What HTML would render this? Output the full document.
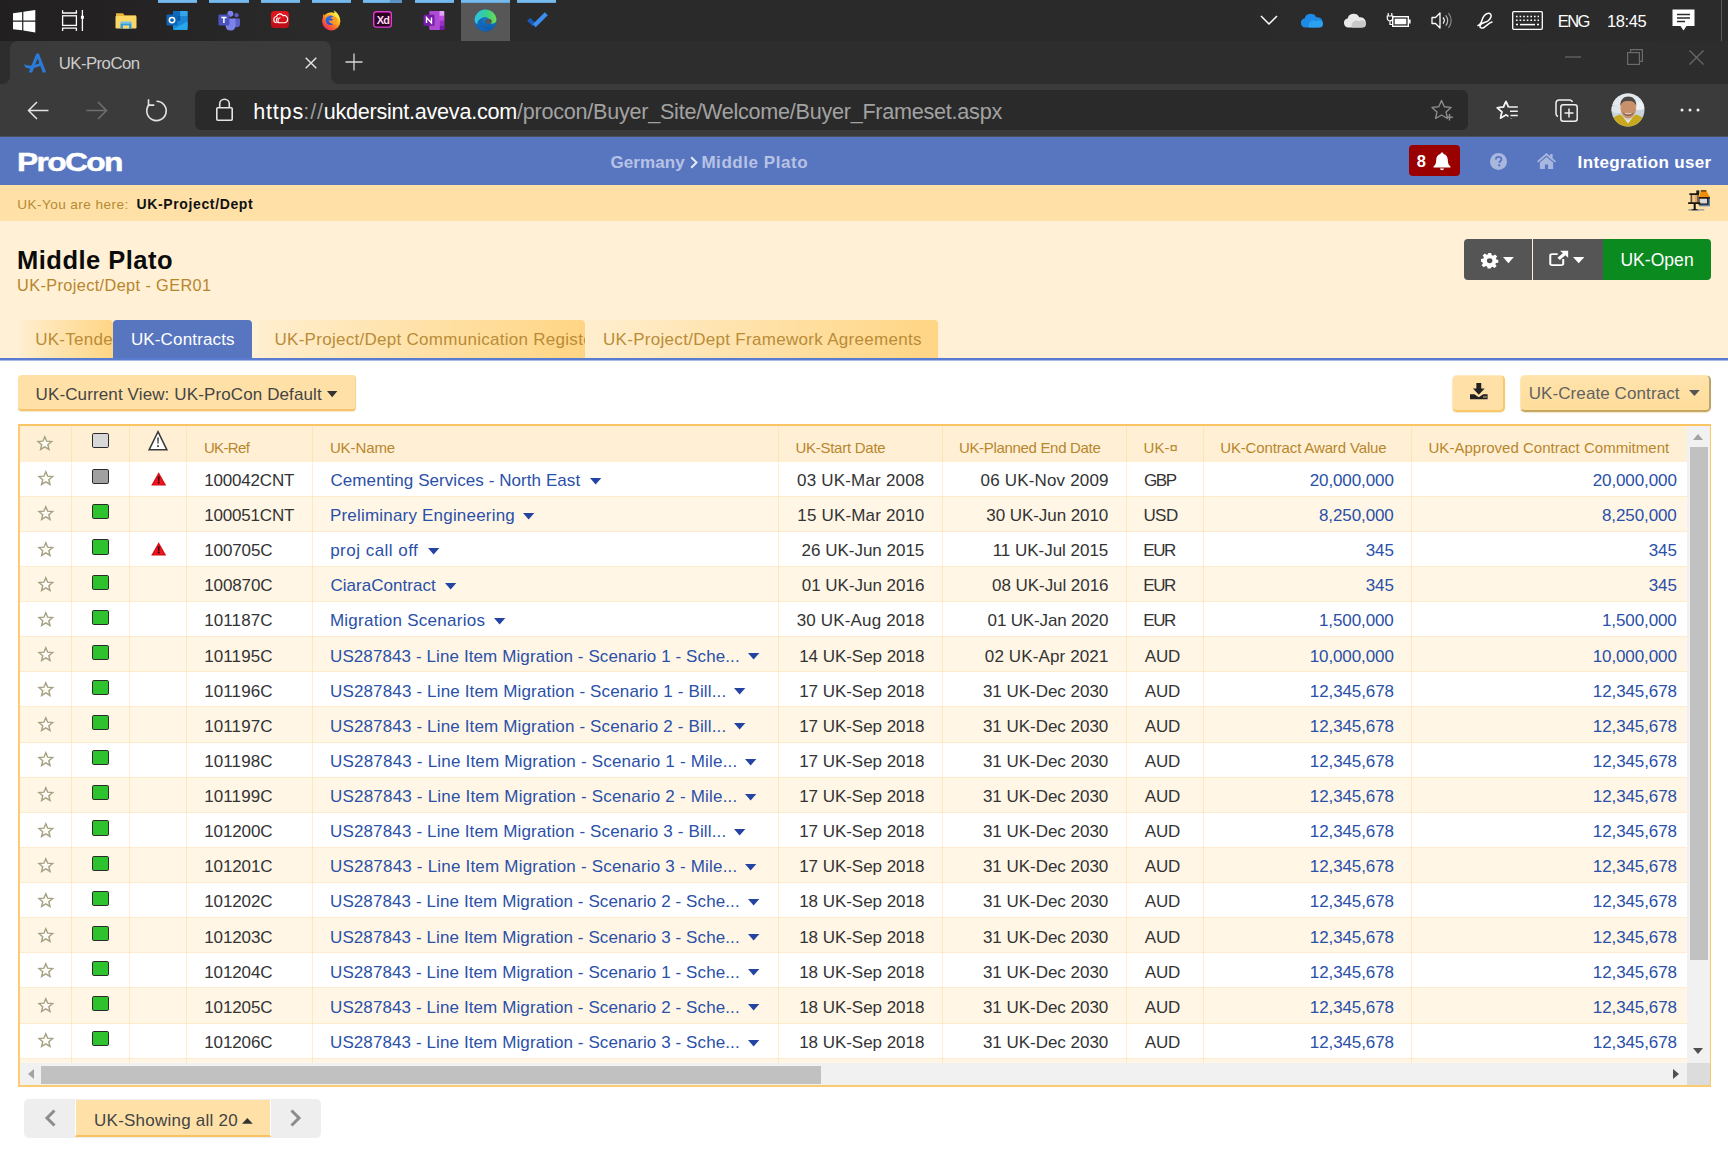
<!DOCTYPE html>
<html><head><meta charset="utf-8"><title>UK-ProCon</title>
<style>
*{box-sizing:border-box;margin:0;padding:0}
html,body{width:1728px;height:1152px;overflow:hidden;background:#fff}
body{font-family:"Liberation Sans",sans-serif;position:relative;color:#333}
.abs{position:absolute}
.t{position:absolute;white-space:nowrap;line-height:normal}
svg{display:block;position:absolute;overflow:visible}
/* ---------- Windows taskbar ---------- */
#taskbar{position:absolute;left:0;top:0;width:1728px;height:41px;background:linear-gradient(90deg,#211f1f 0,#252323 150px,#2a2a2a 300px,#2b2b2b 100%)}
#taskbar .ind{position:absolute;top:0;height:3px;background:linear-gradient(#76b9ed 0,#76b9ed 2px,#6aa6d6 2px)}
#taskbar .act{position:absolute;left:461px;top:3px;width:49px;height:38px;background:#575757}
#taskbar .tt{position:absolute;color:#fff;font-size:16.5px;top:11px;letter-spacing:-.2px}
/* ---------- Edge tab strip ---------- */
#tabstrip{position:absolute;left:0;top:41px;width:1728px;height:43px;background:#2d2d2d}
#tab{position:absolute;left:10px;top:0px;width:321px;height:43px;background:#3b3b3b;border-radius:8px 8px 0 0}
#tab .ttl{position:absolute;left:49px;top:12px;font-size:16.2px;color:#d2d2d2;letter-spacing:-.1px}
#toolbar{position:absolute;left:0;top:84px;width:1728px;height:52px;background:#3b3b3b}
#url{position:absolute;left:195px;top:6px;width:1273px;height:40px;background:#2a2a2a;border-radius:6px}
#url .u{position:absolute;left:59px;top:8px;font-size:20.2px;color:#a4a4a4;white-space:nowrap;letter-spacing:-.1px}
#url .u b{font-weight:normal;color:#fff}
#url .u i{font-style:normal;color:#9a9a9a}
/* ---------- App ---------- */
#nav{position:absolute;left:0;top:136px;width:1728px;height:49px;background:#5876c0;border-top:1px solid #4a4f60}
#crumb{position:absolute;left:611px;top:15px;font-weight:bold;font-size:16.6px;color:#c6cfea;white-space:nowrap;letter-spacing:-.25px}
#user{position:absolute;left:1578px;top:15px;font-weight:bold;font-size:16.6px;color:#fff;white-space:nowrap;letter-spacing:-.3px}
#bell{position:absolute;left:1408.500px;top:8px;width:51.200px;height:31.200px;background:#9b0000;border-radius:4px;color:#fff;font-weight:bold;font-size:16.5px}
#here{position:absolute;left:0;top:185px;width:1728px;height:36px;background:#ffe1a8}
#here .a{position:absolute;left:18px;top:11px;font-size:13.6px;color:#b58a32;white-space:nowrap}
#here .b{position:absolute;left:137px;top:11px;font-size:13.8px;color:#111;font-weight:bold;white-space:nowrap;letter-spacing:-.1px}
#hdr{position:absolute;left:0;top:221px;width:1728px;height:137px;background:#fff0d6}
#blueline{position:absolute;left:0;top:358px;width:1728px;height:3px;background:linear-gradient(#5a7cd0 0,#5a7cd0 2px,#a9bbe6 2px)}
#h1{position:absolute;left:18px;top:244px;font-size:26.5px;font-weight:bold;color:#0b0b0b;white-space:nowrap;letter-spacing:-.75px}
#h2{position:absolute;left:18px;top:275px;font-size:16.8px;color:#b8862d;white-space:nowrap;letter-spacing:-.25px}
.tab{position:absolute;top:320px;height:38px;font-size:17px;color:#b98c38;white-space:nowrap;overflow:hidden;background:linear-gradient(90deg,#ffeecf 0,#ffe5b3 35%,#ffd98f 85%,#ffd585 100%);border-radius:4px 4px 0 0;letter-spacing:-.2px}
.tab span{position:absolute;top:9px}
.tab.on{background:#5876c0;color:#fff}
.btng{position:absolute;top:239px;height:41px;background:#555}
.ybtn{position:absolute;background:#ffe1a8;border-bottom:2px solid #f5c46a;border-right:1px solid #f8d28c;border-radius:3px;font-size:17px;color:#444;white-space:nowrap;letter-spacing:-.2px;box-shadow:0 1px 1px rgba(200,150,50,.25)}
.ybtn span{position:absolute;top:9px}
/* ---------- grid ---------- */
#grid{position:absolute;left:18px;top:424px;width:1693px;height:663px;border:2px solid #fcc563;border-left-color:#fdcb74;border-bottom-color:#fdca70;border-right:1px solid #fdc766;overflow:hidden;background:#fff}
#ghead{position:absolute;left:0;top:0;width:1667px;height:36px;background:#fff0d5}
.row{position:absolute;left:0;width:1667px;font-size:17px;color:#333;white-space:nowrap;border-bottom:1px solid #ffeccd}
.row.even{background:#fff6e6}
.row.odd{background:#fff}
.sq{position:absolute;width:16.600px;height:15.200px;border:1.700px solid #2b2b2b;border-radius:1.800px}
.sq.grey{background:#a0a0a0}
.sq.green{background:#2ec22e}
.vl{position:absolute;top:0;width:1px;height:640px;background:rgba(251,210,140,.38)}
#vsb{position:absolute;left:1667px;top:0;width:23px;height:637px;background:#f1f1f1}
#vsb .thumb{position:absolute;left:2.500px;top:21px;width:18.500px;height:513px;background:#c1c1c1}
#vsb .up{left:6px;top:8px;width:10px;height:6px}
#vsb .dn{left:6px;top:622px;width:10px;height:6px}
#hsb{position:absolute;left:0;top:637px;width:1690px;height:22px;background:#f1f1f1}
#hsb .thumb{position:absolute;left:21px;top:2.5px;width:780px;height:18px;background:#c1c1c1}
#hsb .lf{left:8px;top:6px;width:6px;height:10px}
#hsb .rt{left:1653px;top:6px;width:6px;height:10px}
#hsb .corner{position:absolute;left:1667px;top:0;width:23px;height:22px;background:#dcdcdc}
/* ---------- pager ---------- */
#pager{position:absolute;left:24.400px;top:1099px;width:296.400px;height:38.500px;background:#eeeeee;border-radius:5px}
#pager .mid{position:absolute;left:51px;top:1px;width:196px;height:37px;background:#ffe1a8;border-bottom:2px solid #f9c260;border-left:1px solid #fff;border-right:1px solid #fff;font-size:17px;color:#444;letter-spacing:-.2px}
#pager .mid span{position:absolute;left:18px;top:10px;white-space:nowrap}

</style></head>
<body>
<div id="taskbar">
<div class="ind" style="left:158px;width:39px"></div>
<div class="ind" style="left:209px;width:40px"></div>
<div class="ind" style="left:261px;width:39px"></div>
<div class="ind" style="left:312px;width:39px"></div>
<div class="ind" style="left:363px;width:39px"></div><div class="abs" style="left:390px;top:0;width:12px;height:3px;background:#5a93c2"></div>
<div class="ind" style="left:415px;width:39px"></div>
<div class="ind" style="left:461px;width:49px"></div>
<div class="ind" style="left:517px;width:39px"></div>
<div class="act"></div>
<!-- windows logo -->
<svg style="left:13px;top:9.500px;width:22.300px;height:22.400px" viewBox="0 0 22 22" preserveAspectRatio="none"><path d="M0 3.200L9 2V10.400H0zM10.200 1.800L22 0V10.400H10.200zM0 11.600H9V20L0 18.800zM10.200 11.600H22V22L10.200 20.200z" fill="#fff"/></svg>
<!-- task view -->
<svg style="left:61px;top:9px;width:24px;height:23px" viewBox="0 0 24 23"><path d="M1.600 1.200V4h13.800V1.200M1.600 22V19.200h13.800V22" stroke="#fff" stroke-width="1.300" fill="none"/><rect x="1.600" y="6.800" width="13.800" height="9.600" fill="none" stroke="#fff" stroke-width="1.300"/><path d="M21.400 1v21" stroke="#fff" stroke-width="1.300"/><rect x="19.900" y="6.800" width="3" height="3" fill="#fff"/></svg>
<!-- explorer -->
<svg style="left:115px;top:12px;width:22px;height:18px" viewBox="0 0 22 18"><path d="M1 1.2h7l1.6 2H21v3H1z" fill="#e8b43a"/><rect x="0.5" y="4" width="21" height="12.5" rx="0.8" fill="#fbd766"/><path d="M5.5 16.5v-5.2h11v5.2" fill="#2f9ee6"/><rect x="8" y="13.4" width="6" height="3.1" fill="#fbd766"/><rect x="5.5" y="9.6" width="11" height="1.9" fill="#68c0f5"/></svg>
<!-- outlook -->
<svg style="left:166px;top:10px;width:22px;height:21px" viewBox="0 0 22 21"><rect x="7" y="1" width="14.5" height="15" rx="1" fill="#1a86d8"/><rect x="7" y="1" width="7.2" height="5" fill="#0f6cbd"/><rect x="14.2" y="1" width="7.3" height="5" fill="#35a5ee"/><rect x="14.2" y="6" width="7.3" height="5" fill="#1a86d8"/><rect x="7" y="6" width="7.2" height="5" fill="#0d5aa3"/><path d="M7 11l7.3 4.8 7.2-4.8v8a1 1 0 0 1-1 1H8a1 1 0 0 1-1-1z" fill="#1490df"/><path d="M7 19.5L21.5 11.4v7.6a1 1 0 0 1-1 1z" fill="#28a8ea"/><rect x="0.5" y="4.6" width="11" height="11" rx="1" fill="#0f64b5"/><circle cx="6" cy="10.1" r="2.7" fill="none" stroke="#fff" stroke-width="1.5"/></svg>
<!-- teams -->
<svg style="left:218px;top:10px;width:22px;height:21px" viewBox="0 0 22 21"><circle cx="18.6" cy="5.2" r="2.1" fill="#5b5fc7"/><path d="M15.5 8.4h5.6a.9.9 0 0 1 .9.9v4.8a3.2 3.2 0 0 1-6.5 0z" fill="#5b5fc7"/><circle cx="12.4" cy="3.8" r="3" fill="#7b83eb"/><path d="M7.6 8.4h9a1 1 0 0 1 1 1v6.2a5 5 0 0 1-10 0z" fill="#7b83eb"/><rect x="0.4" y="4.6" width="11" height="11" rx="1" fill="#4b53bc"/><path d="M3.3 7.6h5.2M5.9 7.6v5.4" stroke="#fff" stroke-width="1.5"/></svg>
<!-- creative cloud -->
<svg style="left:271px;top:11px;width:18px;height:16.800px" viewBox="0 0 21 18" preserveAspectRatio="none"><rect x="0" y="0" width="21" height="18" rx="4" fill="#e0141e"/><rect x="0" y="10" width="21" height="8" rx="4" fill="#c00f18"/><rect x="0" y="8" width="21" height="5" fill="#d61219"/><path d="M6 12.600a3.400 3.400 0 0 1 .2-6.700 4.500 4.500 0 0 1 7.900-.8 3.900 3.900 0 1 1 1.300 7.500H9a2.800 2.800 0 0 1-1.200-5.300" fill="none" stroke="#fff" stroke-width="1.300" stroke-linecap="round"/><path d="M9.200 12.600c-2-1.800-1-5 1.500-5.300" fill="none" stroke="#fff" stroke-width="1.100" stroke-linecap="round"/></svg>
<!-- firefox -->
<svg style="left:321px;top:10px;width:20.500px;height:20.600px" viewBox="0 0 21 21" preserveAspectRatio="none"><defs><linearGradient id="ffg" x1="0.850" y1="0.100" x2="0.200" y2="0.950"><stop offset="0" stop-color="#fff04a"/><stop offset="0.350" stop-color="#ffb321"/><stop offset="0.650" stop-color="#ff6a2b"/><stop offset="1" stop-color="#e42a5e"/></linearGradient><linearGradient id="ffb" x1="0" y1="0" x2="1" y2="1"><stop offset="0" stop-color="#1f7cf0"/><stop offset="1" stop-color="#3a33c4"/></linearGradient></defs><circle cx="10.500" cy="11.500" r="9.300" fill="url(#ffg)"/><path d="M12.800 0.300c3.600 1.800 5.900 5 6.400 8.600l-4.700-1.500c.1-2.800-.5-5.200-1.700-7.100z" fill="#ffe648"/><path d="M2.300 4.300c.9.400 1.600 1.100 2.100 2.100l-2.200 2.100c-.4-1.500-.4-2.900.1-4.200z" fill="#ff7a2a"/><circle cx="9.600" cy="10.500" r="4.900" fill="url(#ffb)"/><path d="M15.200 7.300c-2.300-.9-4.700-.3-5.900 1.300 1.400-.1 2.500.4 3.100 1.400-1.200 1.100-3.300 1.200-4.600.3.300 2.800 3.300 4.700 6.200 3.700 2.300-.8 3.400-3.300 2.500-5.600-.3-.4-.8-.8-1.300-1.100z" fill="#ff9b23"/><path d="M6.300 5.600c1-.7 2.300-.8 3.300-.3-.8.300-1.300.800-1.600 1.500-.7-.2-1.300-.6-1.700-1.200z" fill="#ff8a26"/></svg>
<!-- xd -->
<svg style="left:373px;top:11px;width:19px;height:16.800px" viewBox="0 0 19 16.800"><rect x="0.700" y="0.700" width="17.600" height="15.400" rx="2.600" fill="#2e001f" stroke="#e03bd2" stroke-width="1.400"/></svg>
<span class="t" style="left:376.7px;top:14px;font-size:11px;letter-spacing:-0.7px;color:#ffd9f7;font-weight:bold;">Xd</span>
<!-- onenote -->
<svg style="left:423px;top:10px;width:22px;height:21px" viewBox="0 0 22 21"><rect x="6.6" y="1" width="14.6" height="19" rx="1" fill="#ca64ea"/><rect x="16.4" y="1" width="4.8" height="4.8" fill="#e1a6f4"/><rect x="16.4" y="5.8" width="4.8" height="4.8" fill="#c04fe0"/><rect x="16.4" y="10.600" width="4.8" height="4.800" fill="#9a2fc4"/><rect x="16.4" y="15.4" width="4.8" height="4.600" fill="#7719aa"/><rect x="6.6" y="1" width="9.8" height="19" fill="#ae4bd5"/><rect x="0.5" y="4.8" width="11" height="11" rx="1" fill="#7719aa"/><path d="M3.5 13V7.600l5 5.400V7.600" fill="none" stroke="#fff" stroke-width="1.4"/></svg>
<!-- edge -->
<svg style="left:474px;top:9px;width:23px;height:23px" viewBox="0 0 23 23"><defs><linearGradient id="eg1" x1="0" y1="0" x2="1" y2="0"><stop offset="0" stop-color="#2ec1e8"/><stop offset="0.55" stop-color="#37d08c"/><stop offset="1" stop-color="#6fdc4a"/></linearGradient><linearGradient id="eg2" x1="0" y1="0" x2="0" y2="1"><stop offset="0" stop-color="#1b8fd8"/><stop offset="1" stop-color="#0d55a8"/></linearGradient></defs><circle cx="11.500" cy="11.500" r="11" fill="url(#eg2)"/><path d="M0.600 10.400A11 11 0 0 1 22.400 9.800c.3 2.400-.900 4.600-3.400 4.800-2.200.2-3.900-.6-4.400-1.700.9-1.100.7-2.900-.6-4C12 7.400 8.500 7.700 6.400 9.800c-1.700 1.800-2.300 4-1.800 6.300C2.200 14.900.300 12.800.600 10.400z" fill="url(#eg1)"/><path d="M8.300 10.900c-1.500 1.900-1.300 5 .6 7.100 2 2.200 5.100 2.900 8 1.800-2.900 2.900-7.600 3.300-10.800.9-3-2.300-3.700-6.300-1.700-9.500 1.300-1 2.700-1.100 3.900-.3z" fill="#1565b8" opacity=".85"/><ellipse cx="14.600" cy="12.200" rx="3.200" ry="2.500" fill="#565656"/></svg>
<!-- todo check -->
<svg style="left:526px;top:11px;width:23px;height:18px" viewBox="0 0 23 18"><path d="M1.200 9.700l3-3 5.200 5.200-3 3z" fill="#195abd"/><path d="M6.400 14.900l-3-3L15.500 0l3 3z" fill="#3c8df0" transform="translate(3.300 1.300)"/></svg>
<!-- tray -->
<svg style="left:1260px;top:15px;width:18px;height:10px" viewBox="0 0 18 10"><path d="M1 1l8 8 8-8" fill="none" stroke="#fff" stroke-width="1.500"/></svg>
<svg style="left:1300px;top:13px;width:24px;height:15px" viewBox="0 0 24 15"><path d="M5.400 14.500a4.600 4.600 0 0 1-.8-9.100A6.300 6.300 0 0 1 16.300 4.300 5.200 5.200 0 0 1 18.800 14.500z" fill="#1d8ae6"/><path d="M9 14.500a5 5 0 0 1 7.300-6.200 4 4 0 0 1 6.500 4.200 3 3 0 0 1-2.500 2z" fill="#2ea3f2" opacity=".9"/></svg>
<svg style="left:1343px;top:13px;width:24px;height:15px" viewBox="0 0 24 15"><path d="M5.400 14.500a4.600 4.600 0 0 1-.8-9.100A6.300 6.300 0 0 1 16.300 4.300 5.200 5.200 0 0 1 18.800 14.500z" fill="#e9e9e9"/><path d="M9 14.500a5 5 0 0 1 7.300-6.200 4 4 0 0 1 6.500 4.200 3 3 0 0 1-2.500 2z" fill="#c9c9c9"/></svg>
<!-- battery -->
<svg style="left:1387px;top:12px;width:24px;height:16px" viewBox="0 0 24 16"><rect x="5.700" y="4.700" width="15.600" height="9.600" fill="none" stroke="#fff" stroke-width="1.400"/><rect x="7.700" y="6.700" width="11.600" height="5.600" fill="#fff"/><rect x="22" y="7.500" width="1.600" height="4" fill="#fff"/><path d="M1.200 1v3M4.800 1v3M.3 4h5.400v2.200a2.700 2.700 0 0 1-5.400 0zM3 9v3.500h3" fill="none" stroke="#fff" stroke-width="1.200"/></svg>
<!-- speaker -->
<svg style="left:1431px;top:11px;width:22px;height:19px" viewBox="0 0 22 19"><path d="M1 6.500h3.500L9 2v15L4.500 12.500H1z" fill="none" stroke="#fff" stroke-width="1.300" stroke-linejoin="round"/><path d="M12 6.500a4.500 4.500 0 0 1 0 6" fill="none" stroke="#fff" stroke-width="1.200"/><path d="M14.700 4.300a7.800 7.800 0 0 1 0 10.400" fill="none" stroke="#bbb" stroke-width="1.200"/><path d="M17.400 2.200a11 11 0 0 1 0 14.600" fill="none" stroke="#888" stroke-width="1.200"/></svg>
<!-- pen -->
<svg style="left:1476px;top:11px;width:19px;height:19px" viewBox="0 0 19 19"><path d="M2 14.500c4-1 3.500-6.500 6-9.500 2-2.400 5-3.500 6.500-2 1.500 1.500.3 4.500-2 6.500-3 2.600-8 2-8.500 5.500-.2 1.800 1.800 2.800 4 1.500 2.500-1.500 4.500-4.500 8-5.500" fill="none" stroke="#fff" stroke-width="1.500" stroke-linecap="round"/></svg>
<!-- keyboard -->
<svg style="left:1512px;top:11px;width:31px;height:19px" viewBox="0 0 31 19"><rect x="0.700" y="0.700" width="29.600" height="17.600" rx="1" fill="none" stroke="#fff" stroke-width="1.300"/><path d="M4 5.500h23M4 9.300h23" stroke="#fff" stroke-width="1.500" stroke-dasharray="1.600 2"/><path d="M8 13.600h15" stroke="#fff" stroke-width="1.500"/><path d="M4 13.600h2M25 13.600h2" stroke="#fff" stroke-width="1.500"/></svg>
<span class="t" style="left:1557.8px;top:12px;font-size:16.5px;letter-spacing:-1.6px;color:#fff;">ENG</span>
<span class="t" style="left:1607.1px;top:12px;font-size:16.5px;letter-spacing:-0.42px;color:#fff;">18:45</span>
<!-- action center -->
<svg style="left:1672px;top:9px;width:23px;height:23px" viewBox="0 0 23 23"><path d="M0.500 0.500h22v16.500h-8l-3 4.500-3-4.500h-8z" fill="#fff"/><path d="M5 5.500h13M5 9h13M5 12.500h8" stroke="#2b2b2b" stroke-width="1.300"/></svg>
<div class="abs" style="left:1721px;top:0;width:1px;height:41px;background:#5a5a5a"></div>
</div>
<div id="tabstrip">
<div class="abs" style="left:0;top:33px;width:10px;height:10px;background:#3b3b3b"></div><div class="abs" style="left:0;top:23px;width:10px;height:20px;background:#2d2d2d;border-radius:0 0 8px 0"></div>
<div class="abs" style="left:331px;top:33px;width:10px;height:10px;background:#3b3b3b"></div><div class="abs" style="left:331px;top:23px;width:10px;height:20px;background:#2d2d2d;border-radius:0 0 0 8px"></div>
<div id="tab"><svg style="left:14px;top:11px;width:23px;height:22px" viewBox="0 0 23 22"><path d="M12.300 1.500h2.600L22.200 20.400h-3.400L13.600 6.600 8.200 20.400H4.700z" fill="#2b7cd9"/><path d="M0 12.200c4.500 2.300 10 1.800 17.300-2l1 2.600C10.500 17 4.500 17.300 1.300 15.200z" fill="#2b7cd9"/></svg><span class="t" style="left:48.7px;top:13px;font-size:16.8px;letter-spacing:-0.55px;color:#cdcdcd;">UK-ProCon</span>
<svg style="left:295px;top:16px;width:12px;height:12px" viewBox="0 0 12 12"><path d="M.700.700l10.600 10.600M11.300.700L.700 11.300" stroke="#e6e6e6" stroke-width="1.400"/></svg></div>
<svg style="left:345px;top:12px;width:18px;height:18px" viewBox="0 0 18 18"><path d="M9 .500v17M.500 9h17" stroke="#d6d6d6" stroke-width="1.300"/></svg>
<svg style="left:1565px;top:15px;width:16px;height:2px" viewBox="0 0 16 2"><path d="M0 1h16" stroke="#6b6b6b" stroke-width="1.200"/></svg>
<svg style="left:1627px;top:8px;width:16px;height:16px" viewBox="0 0 16 16"><rect x="0.600" y="3.600" width="11.800" height="11.800" fill="none" stroke="#6b6b6b" stroke-width="1.200"/><path d="M3.600 3.600V.600h11.800v11.800h-3" fill="none" stroke="#6b6b6b" stroke-width="1.200"/></svg>
<svg style="left:1689px;top:9px;width:15px;height:15px" viewBox="0 0 15 15"><path d="M.500.500l14 14M14.500.500l-14 14" stroke="#6b6b6b" stroke-width="1.200"/></svg>
</div>
<div id="toolbar">
<svg style="left:27px;top:17px;width:22px;height:19px" viewBox="0 0 22 19"><path d="M21.500 9.500H1.500M10 1L1.500 9.500 10 18" fill="none" stroke="#e4e4e4" stroke-width="1.500"/></svg>
<svg style="left:86px;top:17px;width:22px;height:19px" viewBox="0 0 22 19"><path d="M.500 9.500h20M12 1l8.500 8.500L12 18" fill="none" stroke="#6f6f6f" stroke-width="1.500"/></svg>
<svg style="left:145px;top:14px;width:24px;height:24px" viewBox="0 0 24 24"><path d="M11.500 3.200A9.700 9.700 0 1 1 4.300 6.400" fill="none" stroke="#e4e4e4" stroke-width="1.600"/><path d="M3.500 1.300v5.800h5.800" fill="none" stroke="#e4e4e4" stroke-width="1.600"/></svg>
<div id="url">
<svg style="left:21px;top:8px;width:17px;height:23px" viewBox="0 0 17 23"><rect x=".800" y="9.800" width="15.400" height="12.400" rx="1" fill="none" stroke="#e4e4e4" stroke-width="1.600"/><path d="M3.700 9.800V6a4.800 4.800 0 0 1 9.600 0v3.800" fill="none" stroke="#e4e4e4" stroke-width="1.600"/></svg>
<span class="t" style="left:58.2px;top:9px;font-size:21.6px;letter-spacing:0.8px;color:#fff;">https</span><span class="t" style="left:108.3px;top:9px;font-size:21.6px;letter-spacing:0.9px;color:#9c9c9c;">://</span><span class="t" style="left:128.8px;top:9px;font-size:21.6px;letter-spacing:-0.26px;color:#fff;">ukdersint.aveva.com</span><span class="t" style="left:322px;top:9px;font-size:21.6px;letter-spacing:-0.25px;color:#a2a2a2;">/procon/Buyer_Site/Welcome/Buyer_Frameset.aspx</span>
<svg style="left:1236px;top:9px;width:23px;height:22px" viewBox="0 0 23 22"><path d="M10.500 1.500l2.800 6.200 6.700.700-5 4.500 1.500 6.600-6-3.500-5.900 3.500 1.400-6.600-5-4.500 6.800-.700z" fill="none" stroke="#8c8c8c" stroke-width="1.400" stroke-linejoin="round"/><path d="M18.500 15v6.500M15.300 18.200h6.500" stroke="#8c8c8c" stroke-width="1.500"/><circle cx="18.500" cy="18.200" r="3.600" fill="#2a2a2a" opacity="0"/></svg>
</div>
<svg style="left:1496px;top:16px;width:22px;height:20px" viewBox="0 0 22 20"><path d="M10 1.300l2.500 5.800 6.300.600-4.800 4.200 1.400 6.200L10 14.900l-5.500 3.200 1.400-6.200L1.100 7.700l6.300-.600z" fill="#3b3b3b" stroke="#f0f0f0" stroke-width="1.500" stroke-linejoin="round"/><rect x="12.300" y="5.500" width="10" height="13" fill="#3b3b3b"/><path d="M10 1.300l2.500 5.800M12.300 6.500V5.500M1.100 7.700l6.300-.600L10 1.300M1.100 7.700l4.800 4.200-1.400 6.200L10 14.900l2.300 1.300" fill="none" stroke="#f0f0f0" stroke-width="1.500" stroke-linejoin="round"/><path d="M12.800 7h9M14 11.300h7.800M14.500 15.600h7.300" stroke="#f0f0f0" stroke-width="1.500"/></svg>
<svg style="left:1555px;top:15px;width:24px;height:23px" viewBox="0 0 24 23"><rect x="5.800" y="5.800" width="16.400" height="16.400" rx="2.500" fill="none" stroke="#f0f0f0" stroke-width="1.500"/><path d="M3 17.500A3 3 0 0 1 1 14.800V4A3 3 0 0 1 4 1h10.800a3 3 0 0 1 2.700 2" fill="none" stroke="#f0f0f0" stroke-width="1.500"/><path d="M14 9.500v9M9.500 14h9" stroke="#f0f0f0" stroke-width="1.500"/></svg>
<!-- avatar -->
<svg style="left:1611px;top:9px;width:34px;height:34px" viewBox="0 0 34 34"><defs><clipPath id="avc"><circle cx="17" cy="17" r="16.500"/></clipPath></defs><g clip-path="url(#avc)"><rect width="34" height="34" fill="#c9d3dc"/><rect x="0" y="0" width="34" height="12" fill="#e4e9ee"/><ellipse cx="7" cy="16" rx="8" ry="4" fill="#dfe5ea"/><ellipse cx="28" cy="13" rx="7" ry="4" fill="#eef1f4"/><path d="M0 34V27c3-3 6-5 9-5.500l8 6 8-6c3 .500 6 2.500 9 5.500v7z" fill="#c8a81f"/><path d="M12 24l5 6.500 5-6.500-5 3.500z" fill="#e8e8ea"/><ellipse cx="17.300" cy="15" rx="7.800" ry="10.300" fill="#c9906c"/><path d="M9.300 13.500c-.300-7 3.500-10 8-10s8.300 3 8 10c-1-3.500-2.500-5.500-8-5.500s-7 2-8 5.500z" fill="#4b4a47"/><path d="M11.500 19c1 5.500 10.500 5.500 11.600 0-1.500 2.500-10 2.500-11.600 0z" fill="#8a6650"/><path d="M13.500 19.800c1.500 2 6 2 7.500 0-2 .800-5.500.800-7.500 0z" fill="#f4ece6"/></g></svg>
<svg style="left:1680px;top:24px;width:20px;height:4px" viewBox="0 0 20 4"><circle cx="2" cy="2" r="1.500" fill="#f0f0f0"/><circle cx="10" cy="2" r="1.500" fill="#f0f0f0"/><circle cx="18" cy="2" r="1.500" fill="#f0f0f0"/></svg>
</div>
<div id="nav">
<span class="t" style="left:16.5px;top:10px;font-size:26.5px;letter-spacing:-1.41px;color:#fff;font-weight:bold;transform:scaleX(1.2);transform-origin:0 0;-webkit-text-stroke:.450px #fff;">ProCon</span>
<span class="t" style="left:610.4px;top:16px;font-size:17px;letter-spacing:0.12px;color:#b7c2e5;font-weight:bold;">Germany</span><svg style="left:690px;top:19px;width:8px;height:13px" viewBox="0 0 8 13"><path d="M1.200 1.200l5.300 5.300-5.300 5.300" fill="none" stroke="#e6eaf7" stroke-width="2"/></svg><span class="t" style="left:701.4px;top:16px;font-size:17px;letter-spacing:0.56px;color:#b7c2e5;font-weight:bold;">Middle Plato</span>
<div id="bell"><span class="t" style="left:8.3px;top:7px;font-size:16.5px;letter-spacing:1.5px;color:#fff;font-weight:bold;">8</span><svg style="left:24px;top:7px;width:18px;height:19px" viewBox="0 0 18 19"><path d="M9 .500c.900 0 1.500.600 1.500 1.400 3 .700 4.300 3.200 4.300 6.100 0 3.800 1.200 5.300 2.700 6.600v1H.500v-1C2 13.300 3.200 11.800 3.200 8c0-2.900 1.300-5.400 4.300-6.100C7.500 1.100 8.100.500 9 .500z" fill="#fff"/><path d="M6.800 16.600a2.300 2.300 0 0 0 4.400 0z" fill="#fff"/></svg></div>
<svg style="left:1490px;top:16px;width:17px;height:17px" viewBox="0 0 17 17"><circle cx="8.500" cy="8.500" r="8.500" fill="#a9b7de"/><path d="M5.800 6.600c0-1.700 1.200-2.700 2.800-2.700s2.800 1 2.800 2.400c0 1.900-2.100 2-2.100 3.700" fill="none" stroke="#5876c0" stroke-width="1.900"/><rect x="8.200" y="11.300" width="2" height="2" fill="#5876c0"/></svg>
<svg style="left:1537px;top:16px;width:19px;height:16px" viewBox="0 0 19 16"><path d="M9.500 0L0 8.200l1.200 1.300L9.500 2.500l8.300 7 1.200-1.300-3.400-2.900V1h-2.400v2.200z" fill="#a9b7de"/><path d="M9.500 4l-6.600 5.500V16h5v-4.500h3.200V16h5V9.500z" fill="#a9b7de"/></svg>
<span class="t" style="left:1577.6px;top:16px;font-size:17px;letter-spacing:0.34px;color:#fff;font-weight:bold;">Integration user</span>
</div>
<div id="here"><span class="t" style="left:17.2px;top:12px;font-size:13.6px;letter-spacing:0.43px;color:#b58a32;">UK-You are here:</span><span class="t" style="left:136.4px;top:11px;font-size:14px;letter-spacing:0.64px;color:#111;font-weight:bold;">UK-Project/Dept</span>
<svg style="left:1688px;top:4.600px;width:22px;height:21px" viewBox="0 0 22 21"><rect x="11" y="7" width="11" height="9.300" fill="#5d83a8"/><rect x="10.300" y="6.500" width="10.300" height="8.300" fill="#2a2a2a"/><rect x="11.600" y="8.400" width="7.400" height="5" fill="#d8d8d8"/><path d="M11 7.200L13 .600h5.200L22 7.200z" fill="#ee8d0c"/><path d="M12.700.400h5.600v1h-5.600z" fill="#1a0d00"/><path d="M10.600 7.300H22V8.500H10.600z" fill="#1a0d00"/><rect x="8.300" y=".400" width="3" height="3.600" fill="#1c1c12"/><rect x="3" y="4.200" width="7.400" height="8.800" fill="#d9a86c"/><rect x="4.700" y="4.200" width="2.400" height="8.800" fill="#f0c58e"/><rect x="2.600" y="4.200" width="1.100" height="8.800" fill="#3a2a18"/><rect x="9.400" y="4.200" width="1.100" height="8.800" fill="#5a4026"/><rect x="1.300" y="3.200" width="9.700" height="1.700" rx=".500" fill="#1d160d"/><rect x="0" y="12.300" width="12.400" height="1.700" rx=".500" fill="#1d160d"/><rect x="5.700" y="14" width="2" height="5.300" fill="#0d0d0d"/><rect x="0.300" y="19.200" width="16" height="1.300" fill="#8c9aa0"/><path d="M2.600 20.300c1.500-.8 3-1.200 4.100-1.200s2.600.400 4.100 1.200z" fill="#0d0d0d"/></svg>
</div>
<div id="hdr"></div>
<div id="blueline"></div>
<span class="t" style="left:17.05px;top:245.5px;font-size:25.5px;letter-spacing:0.48px;color:#0b0b0b;font-weight:bold;">Middle Plato</span>
<span class="t" style="left:17px;top:275.5px;font-size:16.3px;letter-spacing:0.39px;color:#b8862d;">UK-Project/Dept - GER01</span>
<div class="tab" style="left:20px;width:93px"><span class="t" style="left:15.2px;top:10px;font-size:17px;letter-spacing:0.26px;">UK-Tenders</span></div>
<div class="tab on" style="left:113px;width:139px"><span class="t" style="left:17.9px;top:10px;font-size:17px;letter-spacing:0.15px;">UK-Contracts</span></div>
<div class="tab" style="left:258px;width:327px"><span class="t" style="left:16.5px;top:10px;font-size:17px;letter-spacing:0.28px;">UK-Project/Dept Communication Register</span></div>
<div class="tab" style="left:585px;width:353px"><span class="t" style="left:18px;top:10px;font-size:17px;letter-spacing:0.3px;">UK-Project/Dept Framework Agreements</span></div>
<!-- top-right button group -->
<div class="btng" style="left:1464px;width:68px;border-radius:4px 0 0 4px"><svg style="left:17px;top:13.500px;width:17.300px;height:15.600px" viewBox="0 0 17 17" preserveAspectRatio="none"><path d="M7 0h3l.4 2.300 1.500.6 1.900-1.300 2.100 2.100-1.300 1.900.6 1.500L17 7.500v3l-2.300.400-.6 1.500 1.300 1.900-2.100 2.100-1.900-1.300-1.500.6L9.500 17h-3l-.4-2.300-1.500-.6-1.900 1.300-2.100-2.100 1.300-1.900-.6-1.500L0 9.500v-3l2.300-.400.6-1.500L1.600 2.700l2.100-2.100 1.900 1.300 1.500-.6z" fill="#fff" transform="translate(0 0)"/><circle cx="8.500" cy="8.500" r="2.700" fill="#4f4f4f"/></svg><svg style="left:38.500px;top:17.800px;width:10.800px;height:6.200px" viewBox="0 0 12 7" preserveAspectRatio="none"><path d="M0 0h12L6 7z" fill="#fff"/></svg></div>
<div class="btng" style="left:1533px;width:70px"><svg style="left:16.200px;top:11.200px;width:20px;height:16.200px" viewBox="0 0 19 18" preserveAspectRatio="none"><path d="M13.500 10v5.200a1.600 1.600 0 0 1-1.600 1.600H2.800a1.600 1.600 0 0 1-1.600-1.600V6.100a1.600 1.600 0 0 1 1.600-1.600h5.400" fill="none" stroke="#fff" stroke-width="1.900"/><path d="M10.500.800h7.700v7.700l-2.700-2.700-5.200 5.200-2.300-2.300 5.200-5.200z" fill="#fff"/></svg><svg style="left:40.300px;top:17.800px;width:11.400px;height:6.200px" viewBox="0 0 12 7" preserveAspectRatio="none"><path d="M0 0h12L6 7z" fill="#fff"/></svg></div>
<div class="btng" style="left:1603px;width:108px;background:#0a8a1f;border-radius:0 4px 4px 0;color:#fff;font-size:17.500px;letter-spacing:-.300px"><span class="t" style="left:17.4px;top:11px;font-size:17.5px;letter-spacing:0.05px;color:#fff;">UK-Open</span></div>
<!-- toolbar row -->
<div class="ybtn" style="left:18.400px;top:375.400px;width:338px;height:36px;border-radius:4px"><span class="t" style="left:17.2px;top:10px;font-size:17px;letter-spacing:0.12px;">UK-Current View: UK-ProCon Default</span><svg style="left:308.800px;top:15.400px;width:10.400px;height:6.300px" viewBox="0 0 12 7" preserveAspectRatio="none"><path d="M0 0h12L6 7z" fill="#333"/></svg></div>
<div class="ybtn" style="left:1452px;top:374.600px;width:53.300px;height:37px;border:1px solid #ffe9bf;border-right:2px solid #fcc767;border-bottom:2px solid #fcc767;border-radius:5px"><svg style="left:16.700px;top:7.700px;width:17.600px;height:16.200px" viewBox="0 0 18 16" preserveAspectRatio="none"><path d="M6.500 0h5v5.500h3.500L9 11.500 3 5.500h3.500z" fill="#222"/><path d="M0 11h4.500L9 14l4.500-3H18v5H0z" fill="#222"/><rect x="13.500" y="13.200" width="1.400" height="1.200" fill="#ffe1a8"/><rect x="15.600" y="13.200" width="1.400" height="1.200" fill="#ffe1a8"/></svg></div>
<div class="ybtn" style="left:1519.600px;top:374.600px;width:191px;height:37px;border:1px solid #ffe6b5;border-bottom:2px solid #c4a862;border-right:2px solid #bba46e;border-radius:5px;background:linear-gradient(#ffe3ab,#ffdd9b)"><span class="t" style="left:8.1px;top:8.4px;font-size:17px;letter-spacing:0.09px;color:#626262;">UK-Create Contract</span><svg style="left:168.900px;top:14.700px;width:10.800px;height:6px" viewBox="0 0 12 7" preserveAspectRatio="none"><path d="M0 0h12L6 7z" fill="#555"/></svg></div>
<div id="grid">
<div id="ghead"><svg style="left:16.8px;top:10.3px;width:15.6px;height:14.3px" viewBox="0 0 15.300 14.300" preserveAspectRatio="none"><path d="M7.65 0.75L9.5 5.2L14.31 5.59L10.65 8.72L11.76 13.41L7.65 10.9L3.54 13.41L4.65 8.72L0.99 5.59L5.8 5.2z" fill="#fffdf6" stroke="#a5a184" stroke-width="1.400" stroke-linejoin="miter"/></svg><span class="sq" style="left:72.4px;top:6.6px;background:#d8d8d8"></span><svg style="left:128px;top:4px;width:20px;height:21px" viewBox="0 0 20 21"><path d="M10 1.600L18.900 19.800H1.100z" fill="#fff" stroke="#3a3a3a" stroke-width="1.500" stroke-linejoin="miter"/><path d="M9.200 7.500h1.600l-.3 6.300h-1z" fill="#333"/><rect x="9.200" y="15.200" width="1.600" height="1.800" fill="#333"/></svg><span class="t" style="left:183.9px;top:13px;font-size:15px;letter-spacing:-0.62px;color:#b8862d;">UK-Ref</span><span class="t" style="left:309.9px;top:13px;font-size:15px;letter-spacing:-0.1px;color:#b8862d;">UK-Name</span><span class="t" style="left:775.4px;top:13px;font-size:15px;letter-spacing:-0.26px;color:#b8862d;">UK-Start Date</span><span class="t" style="left:938.9px;top:13px;font-size:15px;letter-spacing:-0.32px;color:#b8862d;">UK-Planned End Date</span><span class="t" style="left:1123.5px;top:13px;font-size:15px;letter-spacing:0.07px;color:#b8862d;">UK-¤</span><span class="t" style="left:1200.2px;top:13px;font-size:15px;letter-spacing:-0.14px;color:#b8862d;">UK-Contract Award Value</span><span class="t" style="left:1408.5px;top:13px;font-size:15px;letter-spacing:0.02px;color:#b8862d;">UK-Approved Contract Commitment</span></div>
<div class="row odd" style="top:36px;height:35px"><svg style="left:17.8px;top:9.2px;width:15.6px;height:14.3px" viewBox="0 0 15.300 14.300" preserveAspectRatio="none"><path d="M7.65 0.75L9.5 5.2L14.31 5.59L10.65 8.72L11.76 13.41L7.65 10.9L3.54 13.41L4.65 8.72L0.99 5.59L5.8 5.2z" fill="#fffdf6" stroke="#a5a184" stroke-width="1.400" stroke-linejoin="miter"/></svg><span class="sq grey" style="left:72.4px;top:7.1px"></span><svg style="left:130.9px;top:10px;width:15.400px;height:13.800px" viewBox="0 0 16 15" preserveAspectRatio="none"><path d="M8 0.300L15.800 14.600H0.200z" fill="#d40f17"/><path d="M8 2.800L13.400 13.200H2.600z" fill="#f0141d"/><path d="M7 4.800h2l-.35 5h-1.300z" fill="#2a0000"/><rect x="7.100" y="10.500" width="1.800" height="1.900" fill="#2a0000"/></svg><span class="t" style="left:184.3px;top:9px;font-size:17px;letter-spacing:-0.2px;">100042CNT</span><span class="t" style="left:310.5px;top:9px;font-size:17px;letter-spacing:0.07px;color:#2a50a8;">Cementing Services - North East</span><svg style="left:569.7px;top:15.5px;width:11.3px;height:6.5px" viewBox="0 0 12 6.500" preserveAspectRatio="none"><path d="M0 0h12L6 6.500z" fill="#2444a2"/></svg><span class="t" style="left:777px;top:9px;font-size:17px;letter-spacing:0.2px;">03 UK-Mar 2008</span><span class="t" style="left:960.6px;top:9px;font-size:17px;letter-spacing:0.17px;">06 UK-Nov 2009</span><span class="t" style="left:1123.9px;top:9px;font-size:17px;letter-spacing:-1.35px;">GBP</span><span class="t" style="left:1289.7px;top:9px;font-size:17px;letter-spacing:-0.1px;color:#2a50a8;">20,000,000</span><span class="t" style="left:1572.7px;top:9px;font-size:17px;letter-spacing:-0.1px;color:#2a50a8;">20,000,000</span></div>
<div class="row even" style="top:71px;height:35px"><svg style="left:17.8px;top:9.4px;width:15.6px;height:14.3px" viewBox="0 0 15.300 14.300" preserveAspectRatio="none"><path d="M7.65 0.75L9.5 5.2L14.31 5.59L10.65 8.72L11.76 13.41L7.65 10.9L3.54 13.41L4.65 8.72L0.99 5.59L5.8 5.2z" fill="#fffdf6" stroke="#a5a184" stroke-width="1.400" stroke-linejoin="miter"/></svg><span class="sq green" style="left:72.4px;top:7.2px"></span><span class="t" style="left:184.3px;top:9px;font-size:17px;letter-spacing:-0.2px;">100051CNT</span><span class="t" style="left:309.9px;top:9px;font-size:17px;letter-spacing:0.2px;color:#2a50a8;">Preliminary Engineering</span><svg style="left:503.45px;top:15.6px;width:11.3px;height:6.5px" viewBox="0 0 12 6.500" preserveAspectRatio="none"><path d="M0 0h12L6 6.500z" fill="#2444a2"/></svg><span class="t" style="left:777.3px;top:9px;font-size:17px;letter-spacing:0.17px;">15 UK-Mar 2010</span><span class="t" style="left:966.35px;top:9px;font-size:17px;letter-spacing:-0.07px;">30 UK-Jun 2010</span><span class="t" style="left:1123.4px;top:9px;font-size:17px;letter-spacing:-0.55px;">USD</span><span class="t" style="left:1299px;top:9px;font-size:17px;letter-spacing:-0.1px;color:#2a50a8;">8,250,000</span><span class="t" style="left:1582px;top:9px;font-size:17px;letter-spacing:-0.1px;color:#2a50a8;">8,250,000</span></div>
<div class="row odd" style="top:106px;height:35px"><svg style="left:17.8px;top:9.5px;width:15.6px;height:14.3px" viewBox="0 0 15.300 14.300" preserveAspectRatio="none"><path d="M7.65 0.75L9.5 5.2L14.31 5.59L10.65 8.72L11.76 13.41L7.65 10.9L3.54 13.41L4.65 8.72L0.99 5.59L5.8 5.2z" fill="#fffdf6" stroke="#a5a184" stroke-width="1.400" stroke-linejoin="miter"/></svg><span class="sq green" style="left:72.4px;top:7.4px"></span><svg style="left:130.9px;top:10.2px;width:15.400px;height:13.800px" viewBox="0 0 16 15" preserveAspectRatio="none"><path d="M8 0.300L15.800 14.600H0.200z" fill="#d40f17"/><path d="M8 2.800L13.400 13.200H2.600z" fill="#f0141d"/><path d="M7 4.800h2l-.35 5h-1.300z" fill="#2a0000"/><rect x="7.100" y="10.500" width="1.800" height="1.900" fill="#2a0000"/></svg><span class="t" style="left:184.3px;top:9px;font-size:17px;letter-spacing:-0.13px;">100705C</span><span class="t" style="left:310.2px;top:9px;font-size:17px;letter-spacing:0.48px;color:#2a50a8;">proj call off</span><svg style="left:407.7px;top:15.8px;width:11.3px;height:6.5px" viewBox="0 0 12 6.500" preserveAspectRatio="none"><path d="M0 0h12L6 6.500z" fill="#2444a2"/></svg><span class="t" style="left:781.55px;top:9px;font-size:17px;letter-spacing:-0.01px;">26 UK-Jun 2015</span><span class="t" style="left:972.65px;top:9px;font-size:17px;letter-spacing:-0.02px;">11 UK-Jul 2015</span><span class="t" style="left:1123.3px;top:9px;font-size:17px;letter-spacing:-1.4px;">EUR</span><span class="t" style="left:1345.7px;top:9px;font-size:17px;letter-spacing:-0.1px;color:#2a50a8;">345</span><span class="t" style="left:1628.7px;top:9px;font-size:17px;letter-spacing:-0.1px;color:#2a50a8;">345</span></div>
<div class="row even" style="top:141px;height:35px"><svg style="left:17.8px;top:9.6px;width:15.6px;height:14.3px" viewBox="0 0 15.300 14.300" preserveAspectRatio="none"><path d="M7.65 0.75L9.5 5.2L14.31 5.59L10.65 8.72L11.76 13.41L7.65 10.9L3.54 13.41L4.65 8.72L0.99 5.59L5.8 5.2z" fill="#fffdf6" stroke="#a5a184" stroke-width="1.400" stroke-linejoin="miter"/></svg><span class="sq green" style="left:72.4px;top:7.5px"></span><span class="t" style="left:184.3px;top:9px;font-size:17px;letter-spacing:-0.13px;">100870C</span><span class="t" style="left:310.5px;top:9px;font-size:17px;letter-spacing:0.03px;color:#2a50a8;">CiaraContract</span><svg style="left:425.3px;top:15.9px;width:11.3px;height:6.5px" viewBox="0 0 12 6.500" preserveAspectRatio="none"><path d="M0 0h12L6 6.500z" fill="#2444a2"/></svg><span class="t" style="left:781.75px;top:9px;font-size:17px;letter-spacing:-0.02px;">01 UK-Jun 2016</span><span class="t" style="left:972.1px;top:9px;font-size:17px;letter-spacing:-0.06px;">08 UK-Jul 2016</span><span class="t" style="left:1123.3px;top:9px;font-size:17px;letter-spacing:-1.4px;">EUR</span><span class="t" style="left:1345.7px;top:9px;font-size:17px;letter-spacing:-0.1px;color:#2a50a8;">345</span><span class="t" style="left:1628.7px;top:9px;font-size:17px;letter-spacing:-0.1px;color:#2a50a8;">345</span></div>
<div class="row odd" style="top:176px;height:35px"><svg style="left:17.8px;top:9.8px;width:15.6px;height:14.3px" viewBox="0 0 15.300 14.300" preserveAspectRatio="none"><path d="M7.65 0.75L9.5 5.2L14.31 5.59L10.65 8.72L11.76 13.41L7.65 10.9L3.54 13.41L4.65 8.72L0.99 5.59L5.8 5.2z" fill="#fffdf6" stroke="#a5a184" stroke-width="1.400" stroke-linejoin="miter"/></svg><span class="sq green" style="left:72.4px;top:7.6px"></span><span class="t" style="left:184.3px;top:9px;font-size:17px;letter-spacing:0.07px;">101187C</span><span class="t" style="left:309.9px;top:9px;font-size:17px;letter-spacing:0.27px;color:#2a50a8;">Migration Scenarios</span><svg style="left:474.1px;top:16px;width:11.3px;height:6.5px" viewBox="0 0 12 6.500" preserveAspectRatio="none"><path d="M0 0h12L6 6.500z" fill="#2444a2"/></svg><span class="t" style="left:776.75px;top:9px;font-size:17px;letter-spacing:0.15px;">30 UK-Aug 2018</span><span class="t" style="left:967.6px;top:9px;font-size:17px;letter-spacing:-0.16px;">01 UK-Jan 2020</span><span class="t" style="left:1123.3px;top:9px;font-size:17px;letter-spacing:-1.4px;">EUR</span><span class="t" style="left:1299px;top:9px;font-size:17px;letter-spacing:-0.1px;color:#2a50a8;">1,500,000</span><span class="t" style="left:1582px;top:9px;font-size:17px;letter-spacing:-0.1px;color:#2a50a8;">1,500,000</span></div>
<div class="row even" style="top:211px;height:35px"><svg style="left:17.8px;top:9.9px;width:15.6px;height:14.3px" viewBox="0 0 15.300 14.300" preserveAspectRatio="none"><path d="M7.65 0.75L9.5 5.2L14.31 5.59L10.65 8.72L11.76 13.41L7.65 10.9L3.54 13.41L4.65 8.72L0.99 5.59L5.8 5.2z" fill="#fffdf6" stroke="#a5a184" stroke-width="1.400" stroke-linejoin="miter"/></svg><span class="sq green" style="left:72.4px;top:7.7px"></span><span class="t" style="left:184.3px;top:10px;font-size:17px;letter-spacing:0.07px;">101195C</span><span class="t" style="left:310px;top:10px;font-size:17px;letter-spacing:0.1px;color:#2a50a8;">US287843 - Line Item Migration - Scenario 1 - Sche...</span><svg style="left:728px;top:16.1px;width:11.3px;height:6.5px" viewBox="0 0 12 6.500" preserveAspectRatio="none"><path d="M0 0h12L6 6.500z" fill="#2444a2"/></svg><span class="t" style="left:779.2px;top:10px;font-size:17px;letter-spacing:-0.04px;">14 UK-Sep 2018</span><span class="t" style="left:964.8px;top:10px;font-size:17px;letter-spacing:0.13px;">02 UK-Apr 2021</span><span class="t" style="left:1124.7px;top:10px;font-size:17px;letter-spacing:-0.1px;">AUD</span><span class="t" style="left:1289.7px;top:10px;font-size:17px;letter-spacing:-0.1px;color:#2a50a8;">10,000,000</span><span class="t" style="left:1572.7px;top:10px;font-size:17px;letter-spacing:-0.1px;color:#2a50a8;">10,000,000</span></div>
<div class="row odd" style="top:246px;height:35px"><svg style="left:17.8px;top:10px;width:15.6px;height:14.3px" viewBox="0 0 15.300 14.300" preserveAspectRatio="none"><path d="M7.65 0.75L9.5 5.2L14.31 5.59L10.65 8.72L11.76 13.41L7.65 10.9L3.54 13.41L4.65 8.72L0.99 5.59L5.8 5.2z" fill="#fffdf6" stroke="#a5a184" stroke-width="1.400" stroke-linejoin="miter"/></svg><span class="sq green" style="left:72.4px;top:7.9px"></span><span class="t" style="left:184.3px;top:10px;font-size:17px;letter-spacing:0.07px;">101196C</span><span class="t" style="left:310px;top:10px;font-size:17px;letter-spacing:0.15px;color:#2a50a8;">US287843 - Line Item Migration - Scenario 1 - Bill...</span><svg style="left:714.4px;top:16.2px;width:11.3px;height:6.5px" viewBox="0 0 12 6.500" preserveAspectRatio="none"><path d="M0 0h12L6 6.500z" fill="#2444a2"/></svg><span class="t" style="left:779.2px;top:10px;font-size:17px;letter-spacing:-0.04px;">17 UK-Sep 2018</span><span class="t" style="left:962.9px;top:10px;font-size:17px;letter-spacing:-0.02px;">31 UK-Dec 2030</span><span class="t" style="left:1124.7px;top:10px;font-size:17px;letter-spacing:-0.1px;">AUD</span><span class="t" style="left:1289.8px;top:10px;font-size:17px;letter-spacing:-0.1px;color:#2a50a8;">12,345,678</span><span class="t" style="left:1572.8px;top:10px;font-size:17px;letter-spacing:-0.1px;color:#2a50a8;">12,345,678</span></div>
<div class="row even" style="top:281px;height:36px"><svg style="left:17.8px;top:10.1px;width:15.6px;height:14.3px" viewBox="0 0 15.300 14.300" preserveAspectRatio="none"><path d="M7.65 0.75L9.5 5.2L14.31 5.59L10.65 8.72L11.76 13.41L7.65 10.9L3.54 13.41L4.65 8.72L0.99 5.59L5.8 5.2z" fill="#fffdf6" stroke="#a5a184" stroke-width="1.400" stroke-linejoin="miter"/></svg><span class="sq green" style="left:72.4px;top:8px"></span><span class="t" style="left:184.3px;top:10px;font-size:17px;letter-spacing:0.07px;">101197C</span><span class="t" style="left:310px;top:10px;font-size:17px;letter-spacing:0.15px;color:#2a50a8;">US287843 - Line Item Migration - Scenario 2 - Bill...</span><svg style="left:714.4px;top:16.4px;width:11.3px;height:6.5px" viewBox="0 0 12 6.500" preserveAspectRatio="none"><path d="M0 0h12L6 6.500z" fill="#2444a2"/></svg><span class="t" style="left:779.2px;top:10px;font-size:17px;letter-spacing:-0.04px;">17 UK-Sep 2018</span><span class="t" style="left:962.9px;top:10px;font-size:17px;letter-spacing:-0.02px;">31 UK-Dec 2030</span><span class="t" style="left:1124.7px;top:10px;font-size:17px;letter-spacing:-0.1px;">AUD</span><span class="t" style="left:1289.8px;top:10px;font-size:17px;letter-spacing:-0.1px;color:#2a50a8;">12,345,678</span><span class="t" style="left:1572.8px;top:10px;font-size:17px;letter-spacing:-0.1px;color:#2a50a8;">12,345,678</span></div>
<div class="row odd" style="top:317px;height:35px"><svg style="left:17.8px;top:9.2px;width:15.6px;height:14.3px" viewBox="0 0 15.300 14.300" preserveAspectRatio="none"><path d="M7.65 0.75L9.5 5.2L14.31 5.59L10.65 8.72L11.76 13.41L7.65 10.9L3.54 13.41L4.65 8.72L0.99 5.59L5.8 5.2z" fill="#fffdf6" stroke="#a5a184" stroke-width="1.400" stroke-linejoin="miter"/></svg><span class="sq green" style="left:72.4px;top:7.1px"></span><span class="t" style="left:184.3px;top:9px;font-size:17px;letter-spacing:0.07px;">101198C</span><span class="t" style="left:310px;top:9px;font-size:17px;letter-spacing:0.2px;color:#2a50a8;">US287843 - Line Item Migration - Scenario 1 - Mile...</span><svg style="left:725.3px;top:15.5px;width:11.3px;height:6.5px" viewBox="0 0 12 6.500" preserveAspectRatio="none"><path d="M0 0h12L6 6.500z" fill="#2444a2"/></svg><span class="t" style="left:779.2px;top:9px;font-size:17px;letter-spacing:-0.04px;">17 UK-Sep 2018</span><span class="t" style="left:962.9px;top:9px;font-size:17px;letter-spacing:-0.02px;">31 UK-Dec 2030</span><span class="t" style="left:1124.7px;top:9px;font-size:17px;letter-spacing:-0.1px;">AUD</span><span class="t" style="left:1289.8px;top:9px;font-size:17px;letter-spacing:-0.1px;color:#2a50a8;">12,345,678</span><span class="t" style="left:1572.8px;top:9px;font-size:17px;letter-spacing:-0.1px;color:#2a50a8;">12,345,678</span></div>
<div class="row even" style="top:352px;height:35px"><svg style="left:17.8px;top:9.4px;width:15.6px;height:14.3px" viewBox="0 0 15.300 14.300" preserveAspectRatio="none"><path d="M7.65 0.75L9.5 5.2L14.31 5.59L10.65 8.72L11.76 13.41L7.65 10.9L3.54 13.41L4.65 8.72L0.99 5.59L5.8 5.2z" fill="#fffdf6" stroke="#a5a184" stroke-width="1.400" stroke-linejoin="miter"/></svg><span class="sq green" style="left:72.4px;top:7.2px"></span><span class="t" style="left:184.3px;top:9px;font-size:17px;letter-spacing:0.07px;">101199C</span><span class="t" style="left:310px;top:9px;font-size:17px;letter-spacing:0.2px;color:#2a50a8;">US287843 - Line Item Migration - Scenario 2 - Mile...</span><svg style="left:725.3px;top:15.6px;width:11.3px;height:6.5px" viewBox="0 0 12 6.500" preserveAspectRatio="none"><path d="M0 0h12L6 6.500z" fill="#2444a2"/></svg><span class="t" style="left:779.2px;top:9px;font-size:17px;letter-spacing:-0.04px;">17 UK-Sep 2018</span><span class="t" style="left:962.9px;top:9px;font-size:17px;letter-spacing:-0.02px;">31 UK-Dec 2030</span><span class="t" style="left:1124.7px;top:9px;font-size:17px;letter-spacing:-0.1px;">AUD</span><span class="t" style="left:1289.8px;top:9px;font-size:17px;letter-spacing:-0.1px;color:#2a50a8;">12,345,678</span><span class="t" style="left:1572.8px;top:9px;font-size:17px;letter-spacing:-0.1px;color:#2a50a8;">12,345,678</span></div>
<div class="row odd" style="top:387px;height:35px"><svg style="left:17.8px;top:9.5px;width:15.6px;height:14.3px" viewBox="0 0 15.300 14.300" preserveAspectRatio="none"><path d="M7.65 0.75L9.5 5.2L14.31 5.59L10.65 8.72L11.76 13.41L7.65 10.9L3.54 13.41L4.65 8.72L0.99 5.59L5.8 5.2z" fill="#fffdf6" stroke="#a5a184" stroke-width="1.400" stroke-linejoin="miter"/></svg><span class="sq green" style="left:72.4px;top:7.4px"></span><span class="t" style="left:184.3px;top:9px;font-size:17px;letter-spacing:-0.13px;">101200C</span><span class="t" style="left:310px;top:9px;font-size:17px;letter-spacing:0.15px;color:#2a50a8;">US287843 - Line Item Migration - Scenario 3 - Bill...</span><svg style="left:714.4px;top:15.8px;width:11.3px;height:6.5px" viewBox="0 0 12 6.500" preserveAspectRatio="none"><path d="M0 0h12L6 6.500z" fill="#2444a2"/></svg><span class="t" style="left:779.2px;top:9px;font-size:17px;letter-spacing:-0.04px;">17 UK-Sep 2018</span><span class="t" style="left:962.9px;top:9px;font-size:17px;letter-spacing:-0.02px;">31 UK-Dec 2030</span><span class="t" style="left:1124.7px;top:9px;font-size:17px;letter-spacing:-0.1px;">AUD</span><span class="t" style="left:1289.8px;top:9px;font-size:17px;letter-spacing:-0.1px;color:#2a50a8;">12,345,678</span><span class="t" style="left:1572.8px;top:9px;font-size:17px;letter-spacing:-0.1px;color:#2a50a8;">12,345,678</span></div>
<div class="row even" style="top:422px;height:35px"><svg style="left:17.8px;top:9.6px;width:15.6px;height:14.3px" viewBox="0 0 15.300 14.300" preserveAspectRatio="none"><path d="M7.65 0.75L9.5 5.2L14.31 5.59L10.65 8.72L11.76 13.41L7.65 10.9L3.54 13.41L4.65 8.72L0.99 5.59L5.8 5.2z" fill="#fffdf6" stroke="#a5a184" stroke-width="1.400" stroke-linejoin="miter"/></svg><span class="sq green" style="left:72.4px;top:7.5px"></span><span class="t" style="left:184.3px;top:9px;font-size:17px;letter-spacing:-0.13px;">101201C</span><span class="t" style="left:310px;top:9px;font-size:17px;letter-spacing:0.2px;color:#2a50a8;">US287843 - Line Item Migration - Scenario 3 - Mile...</span><svg style="left:725.3px;top:15.9px;width:11.3px;height:6.5px" viewBox="0 0 12 6.500" preserveAspectRatio="none"><path d="M0 0h12L6 6.500z" fill="#2444a2"/></svg><span class="t" style="left:779.2px;top:9px;font-size:17px;letter-spacing:-0.04px;">17 UK-Sep 2018</span><span class="t" style="left:962.9px;top:9px;font-size:17px;letter-spacing:-0.02px;">31 UK-Dec 2030</span><span class="t" style="left:1124.7px;top:9px;font-size:17px;letter-spacing:-0.1px;">AUD</span><span class="t" style="left:1289.8px;top:9px;font-size:17px;letter-spacing:-0.1px;color:#2a50a8;">12,345,678</span><span class="t" style="left:1572.8px;top:9px;font-size:17px;letter-spacing:-0.1px;color:#2a50a8;">12,345,678</span></div>
<div class="row odd" style="top:457px;height:35px"><svg style="left:17.8px;top:9.8px;width:15.6px;height:14.3px" viewBox="0 0 15.300 14.300" preserveAspectRatio="none"><path d="M7.65 0.75L9.5 5.2L14.31 5.59L10.65 8.72L11.76 13.41L7.65 10.9L3.54 13.41L4.65 8.72L0.99 5.59L5.8 5.2z" fill="#fffdf6" stroke="#a5a184" stroke-width="1.400" stroke-linejoin="miter"/></svg><span class="sq green" style="left:72.4px;top:7.6px"></span><span class="t" style="left:184.3px;top:9px;font-size:17px;letter-spacing:-0.13px;">101202C</span><span class="t" style="left:310px;top:9px;font-size:17px;letter-spacing:0.1px;color:#2a50a8;">US287843 - Line Item Migration - Scenario 2 - Sche...</span><svg style="left:728px;top:16px;width:11.3px;height:6.5px" viewBox="0 0 12 6.500" preserveAspectRatio="none"><path d="M0 0h12L6 6.500z" fill="#2444a2"/></svg><span class="t" style="left:779.2px;top:9px;font-size:17px;letter-spacing:-0.04px;">18 UK-Sep 2018</span><span class="t" style="left:962.9px;top:9px;font-size:17px;letter-spacing:-0.02px;">31 UK-Dec 2030</span><span class="t" style="left:1124.7px;top:9px;font-size:17px;letter-spacing:-0.1px;">AUD</span><span class="t" style="left:1289.8px;top:9px;font-size:17px;letter-spacing:-0.1px;color:#2a50a8;">12,345,678</span><span class="t" style="left:1572.8px;top:9px;font-size:17px;letter-spacing:-0.1px;color:#2a50a8;">12,345,678</span></div>
<div class="row even" style="top:492px;height:35px"><svg style="left:17.8px;top:9.9px;width:15.6px;height:14.3px" viewBox="0 0 15.300 14.300" preserveAspectRatio="none"><path d="M7.65 0.75L9.5 5.2L14.31 5.59L10.65 8.72L11.76 13.41L7.65 10.9L3.54 13.41L4.65 8.72L0.99 5.59L5.8 5.2z" fill="#fffdf6" stroke="#a5a184" stroke-width="1.400" stroke-linejoin="miter"/></svg><span class="sq green" style="left:72.4px;top:7.7px"></span><span class="t" style="left:184.3px;top:10px;font-size:17px;letter-spacing:-0.13px;">101203C</span><span class="t" style="left:310px;top:10px;font-size:17px;letter-spacing:0.1px;color:#2a50a8;">US287843 - Line Item Migration - Scenario 3 - Sche...</span><svg style="left:728px;top:16.1px;width:11.3px;height:6.5px" viewBox="0 0 12 6.500" preserveAspectRatio="none"><path d="M0 0h12L6 6.500z" fill="#2444a2"/></svg><span class="t" style="left:779.2px;top:10px;font-size:17px;letter-spacing:-0.04px;">18 UK-Sep 2018</span><span class="t" style="left:962.9px;top:10px;font-size:17px;letter-spacing:-0.02px;">31 UK-Dec 2030</span><span class="t" style="left:1124.7px;top:10px;font-size:17px;letter-spacing:-0.1px;">AUD</span><span class="t" style="left:1289.8px;top:10px;font-size:17px;letter-spacing:-0.1px;color:#2a50a8;">12,345,678</span><span class="t" style="left:1572.8px;top:10px;font-size:17px;letter-spacing:-0.1px;color:#2a50a8;">12,345,678</span></div>
<div class="row odd" style="top:527px;height:35px"><svg style="left:17.8px;top:10px;width:15.6px;height:14.3px" viewBox="0 0 15.300 14.300" preserveAspectRatio="none"><path d="M7.65 0.75L9.5 5.2L14.31 5.59L10.65 8.72L11.76 13.41L7.65 10.9L3.54 13.41L4.65 8.72L0.99 5.59L5.8 5.2z" fill="#fffdf6" stroke="#a5a184" stroke-width="1.400" stroke-linejoin="miter"/></svg><span class="sq green" style="left:72.4px;top:7.9px"></span><span class="t" style="left:184.3px;top:10px;font-size:17px;letter-spacing:-0.13px;">101204C</span><span class="t" style="left:310px;top:10px;font-size:17px;letter-spacing:0.1px;color:#2a50a8;">US287843 - Line Item Migration - Scenario 1 - Sche...</span><svg style="left:728px;top:16.2px;width:11.3px;height:6.5px" viewBox="0 0 12 6.500" preserveAspectRatio="none"><path d="M0 0h12L6 6.500z" fill="#2444a2"/></svg><span class="t" style="left:779.2px;top:10px;font-size:17px;letter-spacing:-0.04px;">18 UK-Sep 2018</span><span class="t" style="left:962.9px;top:10px;font-size:17px;letter-spacing:-0.02px;">31 UK-Dec 2030</span><span class="t" style="left:1124.7px;top:10px;font-size:17px;letter-spacing:-0.1px;">AUD</span><span class="t" style="left:1289.8px;top:10px;font-size:17px;letter-spacing:-0.1px;color:#2a50a8;">12,345,678</span><span class="t" style="left:1572.8px;top:10px;font-size:17px;letter-spacing:-0.1px;color:#2a50a8;">12,345,678</span></div>
<div class="row even" style="top:562px;height:36px"><svg style="left:17.8px;top:10.1px;width:15.6px;height:14.3px" viewBox="0 0 15.300 14.300" preserveAspectRatio="none"><path d="M7.65 0.75L9.5 5.2L14.31 5.59L10.65 8.72L11.76 13.41L7.65 10.9L3.54 13.41L4.65 8.72L0.99 5.59L5.8 5.2z" fill="#fffdf6" stroke="#a5a184" stroke-width="1.400" stroke-linejoin="miter"/></svg><span class="sq green" style="left:72.4px;top:8px"></span><span class="t" style="left:184.3px;top:10px;font-size:17px;letter-spacing:-0.13px;">101205C</span><span class="t" style="left:310px;top:10px;font-size:17px;letter-spacing:0.1px;color:#2a50a8;">US287843 - Line Item Migration - Scenario 2 - Sche...</span><svg style="left:728px;top:16.4px;width:11.3px;height:6.5px" viewBox="0 0 12 6.500" preserveAspectRatio="none"><path d="M0 0h12L6 6.500z" fill="#2444a2"/></svg><span class="t" style="left:779.2px;top:10px;font-size:17px;letter-spacing:-0.04px;">18 UK-Sep 2018</span><span class="t" style="left:962.9px;top:10px;font-size:17px;letter-spacing:-0.02px;">31 UK-Dec 2030</span><span class="t" style="left:1124.7px;top:10px;font-size:17px;letter-spacing:-0.1px;">AUD</span><span class="t" style="left:1289.8px;top:10px;font-size:17px;letter-spacing:-0.1px;color:#2a50a8;">12,345,678</span><span class="t" style="left:1572.8px;top:10px;font-size:17px;letter-spacing:-0.1px;color:#2a50a8;">12,345,678</span></div>
<div class="row odd" style="top:598px;height:35px"><svg style="left:17.8px;top:9.2px;width:15.6px;height:14.3px" viewBox="0 0 15.300 14.300" preserveAspectRatio="none"><path d="M7.65 0.75L9.5 5.2L14.31 5.59L10.65 8.72L11.76 13.41L7.65 10.9L3.54 13.41L4.65 8.72L0.99 5.59L5.8 5.2z" fill="#fffdf6" stroke="#a5a184" stroke-width="1.400" stroke-linejoin="miter"/></svg><span class="sq green" style="left:72.4px;top:7.1px"></span><span class="t" style="left:184.3px;top:9px;font-size:17px;letter-spacing:-0.13px;">101206C</span><span class="t" style="left:310px;top:9px;font-size:17px;letter-spacing:0.1px;color:#2a50a8;">US287843 - Line Item Migration - Scenario 3 - Sche...</span><svg style="left:728px;top:15.5px;width:11.3px;height:6.5px" viewBox="0 0 12 6.500" preserveAspectRatio="none"><path d="M0 0h12L6 6.500z" fill="#2444a2"/></svg><span class="t" style="left:779.2px;top:9px;font-size:17px;letter-spacing:-0.04px;">18 UK-Sep 2018</span><span class="t" style="left:962.9px;top:9px;font-size:17px;letter-spacing:-0.02px;">31 UK-Dec 2030</span><span class="t" style="left:1124.7px;top:9px;font-size:17px;letter-spacing:-0.1px;">AUD</span><span class="t" style="left:1289.8px;top:9px;font-size:17px;letter-spacing:-0.1px;color:#2a50a8;">12,345,678</span><span class="t" style="left:1572.8px;top:9px;font-size:17px;letter-spacing:-0.1px;color:#2a50a8;">12,345,678</span></div>
<div class="row even" style="top:633px;height:40px"></div>
<div class="vl" style="left:51px"></div><div class="vl" style="left:109px"></div><div class="vl" style="left:166px"></div><div class="vl" style="left:292px"></div><div class="vl" style="left:758px"></div><div class="vl" style="left:922px"></div><div class="vl" style="left:1106px"></div><div class="vl" style="left:1183px"></div><div class="vl" style="left:1391px"></div>
<div id="vsb"><div class="thumb"></div><svg class="up" viewBox="0 0 10 6"><path d="M0 6L5 0l5 6z" fill="#a3a3a3"/></svg><svg class="dn" viewBox="0 0 10 6"><path d="M0 0h10L5 6z" fill="#505050"/></svg></div>
<div id="hsb"><div class="thumb"></div><svg class="lf" viewBox="0 0 6 10"><path d="M6 0v10L0 5z" fill="#a3a3a3"/></svg><svg class="rt" viewBox="0 0 6 10"><path d="M0 0l6 5-6 5z" fill="#505050"/></svg><div class="corner"></div></div>
</div>
<div id="pager"><svg style="left:21px;top:10px;width:11px;height:18px" viewBox="0 0 11 18"><path d="M9.500 1.500L2 9l7.500 7.500" fill="none" stroke="#8c8c8c" stroke-width="3"/></svg>
<div class="mid"><span class="t" style="left:17.7px;top:10.6px;font-size:17px;letter-spacing:0.23px;">UK-Showing all 20</span><svg style="left:165.300px;top:17.700px;width:10.700px;height:5.700px" viewBox="0 0 12 7" preserveAspectRatio="none"><path d="M0 7h12L6 0z" fill="#333"/></svg></div>
<svg style="left:266px;top:10px;width:11px;height:18px" viewBox="0 0 11 18"><path d="M1.500 1.500L9 9l-7.500 7.500" fill="none" stroke="#8c8c8c" stroke-width="3"/></svg></div>
</body></html>
